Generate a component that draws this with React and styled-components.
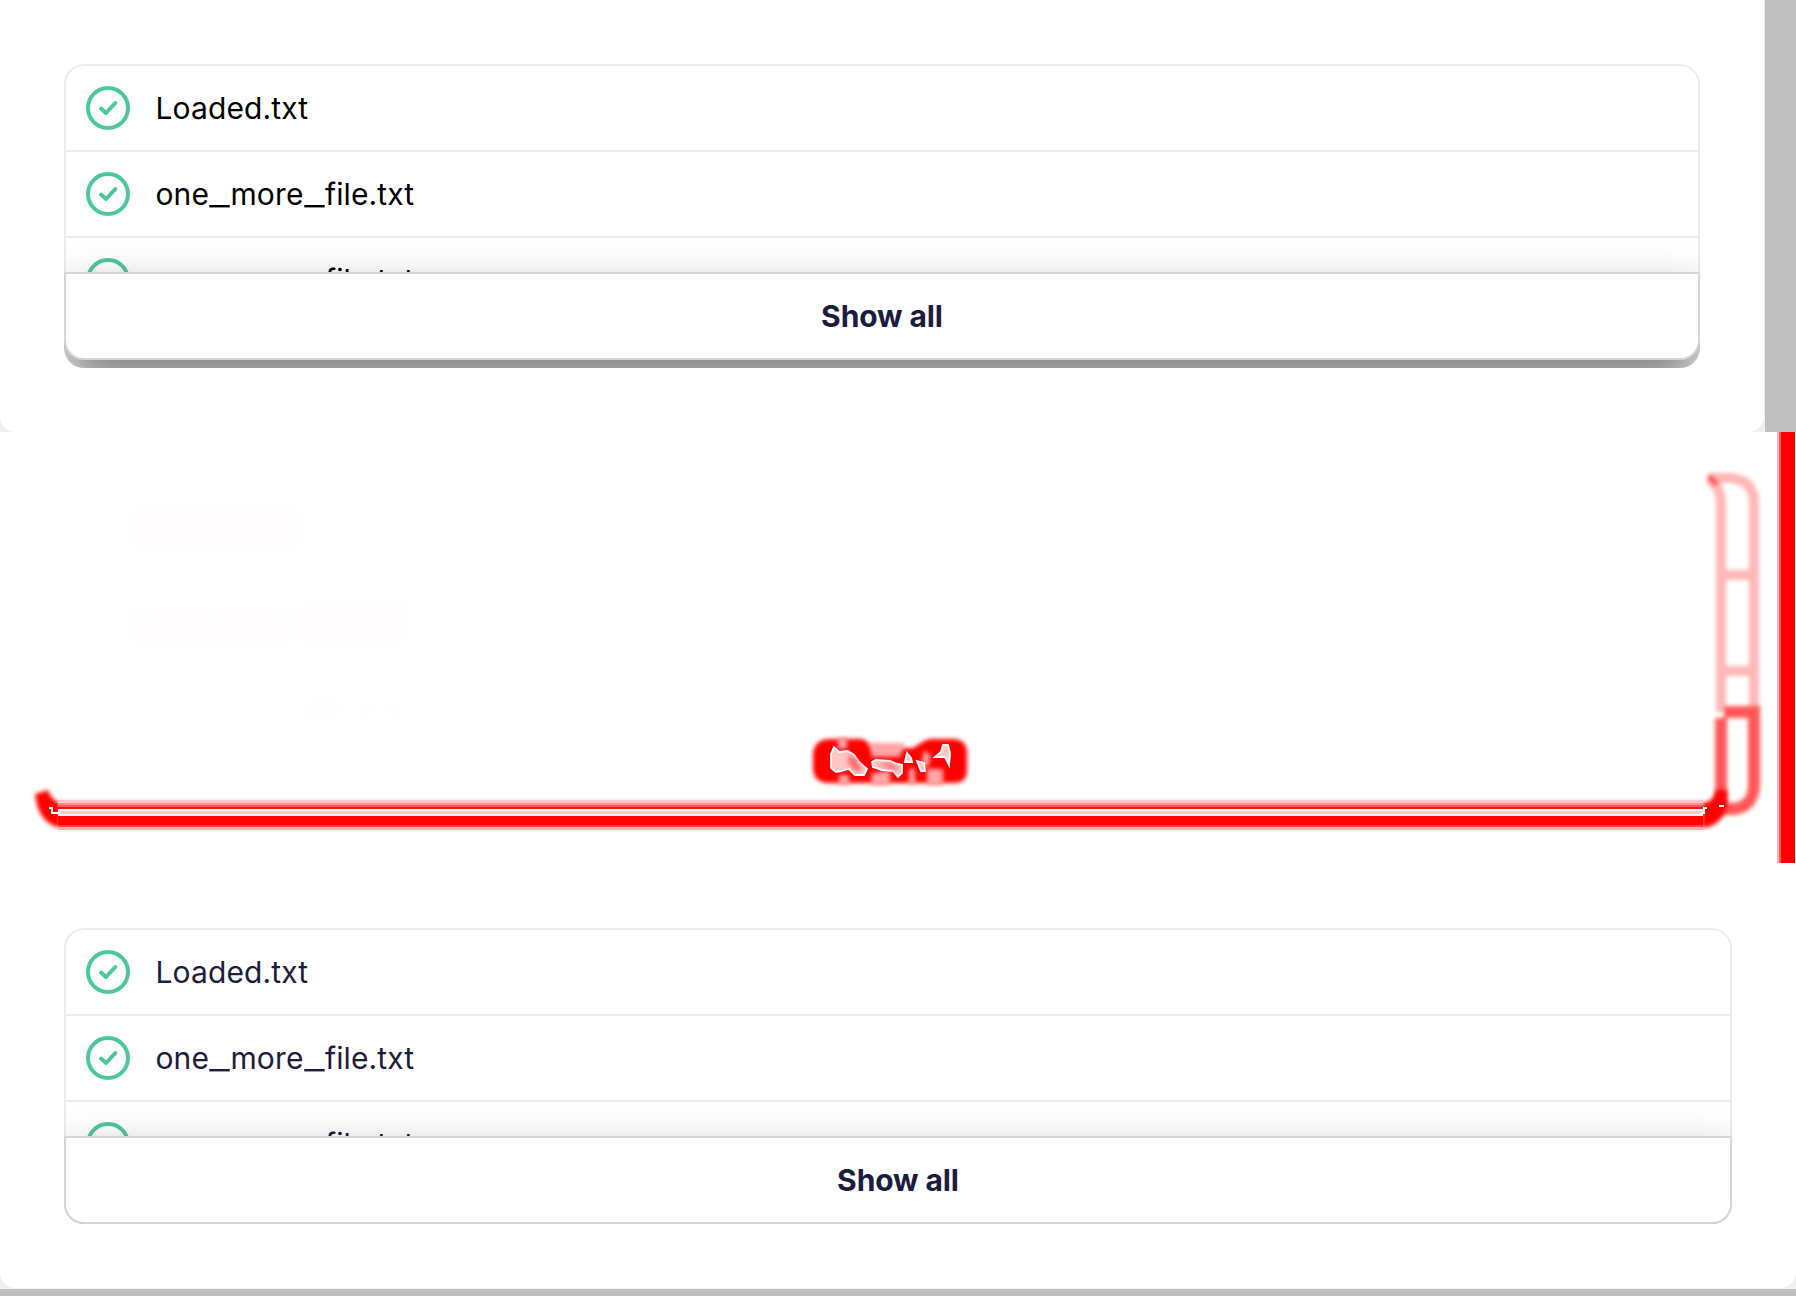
import React from 'react';
import styled, { createGlobalStyle } from 'styled-components';

const Global = createGlobalStyle`
  * { box-sizing: border-box; }
  body { margin: 0; background: #fff; font-family: Inter, "Liberation Sans", sans-serif; }
`;

const Page = styled.main`
  width: 1796px;
  height: 1296px;
  overflow: hidden;
  display: flex;
  flex-direction: column;
  background: #fff;
`;

const Frame = styled.section`
  display: flex;
  align-items: flex-start;
  height: 432px;
  background: #bfbfbf;
`;

const Backing = styled.div`
  width: ${(p) => p.$width}px;
  height: ${(p) => p.$height}px;
  background: #f0f0f0;
`;

const Surface = styled.div`
  height: ${(p) => p.$height}px;
  margin-right: ${(p) => p.$inset}px;
  padding: 64px;
  background: #fff;
  border-radius: 0 0 16px 16px;
`;

const Card = styled.div`
  display: flex;
  flex-direction: column;
  height: ${(p) => p.$height}px;
  border-radius: 20px;
  overflow: hidden;
  color: ${(p) => p.$ink};
`;

const Files = styled.ul`
  flex: none;
  height: 208px;
  margin: 0;
  padding: 0;
  list-style: none;
  overflow: hidden;
  border: 2px solid #ebebeb;
  border-bottom: 0;
  border-radius: 20px 20px 0 0;
`;

const File = styled.li`
  display: flex;
  align-items: center;
  gap: 25.5px;
  height: 86px;
  padding: 0 20px;
  border-bottom: 2px solid #ebebeb;
  font-size: 30px;
  line-height: 40px;
`;

const Name = styled.span`
  letter-spacing: 0.12px;
  white-space: nowrap;
`;

const Underscore = styled.span`
  display: inline-block;
  width: 21.4px;
  text-align: center;
  transform: scaleX(1.5);
`;

const Icon = styled.svg`
  flex: none;
  width: 44px;
  height: 44px;
`;

const ShowAll = styled.button`
  flex: none;
  position: relative;
  height: 88px;
  padding: 0;
  border: 2px solid #d6d6d6;
  border-radius: 0 0 20px 20px;
  background: #fff;
  box-shadow: 0 24px 46px rgba(0, 0, 0, 0.5);
  color: #1c1c3c;
  font: 700 30px/40px Inter, "Liberation Sans", sans-serif;
  letter-spacing: -0.1px;
`;

const Heatmap = styled.svg`
  display: block;
  flex: none;
  width: 1796px;
  height: 432px;
`;

const files = ['Loaded.txt', 'one_more_file.txt', 'one_more_file.txt'];

function CheckIcon() {
  return (
    <Icon viewBox="0 0 44 44" fill="none" stroke="#4bc99b" strokeWidth="4">
      <circle cx="22" cy="22" r="20" />
      <path d="M15 22.5 20 27 29.3 17" strokeLinecap="round" strokeLinejoin="round" />
    </Icon>
  );
}

function FileName({ text }) {
  return (
    <Name>
      {text.split('_').map((part, i) => (
        <React.Fragment key={i}>
          {i > 0 && <Underscore>_</Underscore>}
          {part}
        </React.Fragment>
      ))}
    </Name>
  );
}

function FileList({ ink, height }) {
  return (
    <Card $ink={ink} $height={height}>
      <Files>
        {files.map((f, i) => (
          <File key={i}>
            <CheckIcon />
            <FileName text={f} />
          </File>
        ))}
      </Files>
      <ShowAll>Show all</ShowAll>
    </Card>
  );
}

// [top, bottom, colour] bands of the changed bottom edge
const bands = [
  [798, 800, '#fff0f0'],
  [800, 803, '#ffc4c4'],
  [803, 805, '#ff9090'],
  [805, 807, '#ff5858'],
  [807, 809, '#ff1414'],
  [809, 811, '#ffffff'],
  [811, 814, '#ffcccc'],
  [814, 816, '#fff4f4'],
  [816, 825, '#ff0404'],
  [825, 827, '#ff4040'],
  [827, 830, '#ffacac'],
  [830, 832, '#fff2f2'],
];

function DiffMap() {
  return (
    <Heatmap viewBox="0 432 1796 432" fill="none">
      <defs>
        <filter id="soft" filterUnits="userSpaceOnUse" x="0" y="432" width="1796" height="432" colorInterpolationFilters="sRGB">
          <feGaussianBlur stdDeviation="2" />
        </filter>
      </defs>
      <g fill="#fffcfd" filter="url(#soft)">
        <rect x="131" y="509" width="169" height="38" rx="14" />
        <rect x="130" y="608" width="96" height="36" rx="14" />
        <rect x="206" y="608" width="90" height="36" rx="14" />
        <rect x="300" y="602" width="108" height="42" rx="14" />
        <rect x="307" y="700" width="32" height="17" rx="8" />
        <rect x="360" y="702" width="12" height="14" rx="6" />
        <rect x="389" y="702" width="12" height="14" rx="6" />
      </g>
      <g stroke="#ffb6b6" strokeWidth="10" filter="url(#soft)">
        <path d="M1708 478H1730Q1754 480 1754 503V712" />
        <path d="M1709 479Q1721 487 1721 504V712" />
        <path d="M1724 575H1751M1724 671H1751" />
      </g>
      <path d="M1709 477 1717 484" stroke="#ff5050" strokeWidth="5" filter="url(#soft)" />
      <path
        d="M1724 712H1754V787Q1752 809 1730 809H1721V718"
        stroke="#ff5656"
        strokeWidth="12"
        filter="url(#soft)"
      />
      <path
        d="M35 794 48 790Q51 800 60 803V828Q38 823 35 794ZM1702 803Q1714 802 1716 790H1727V806Q1722 826 1702 828Z"
        fill="#f00"
        filter="url(#soft)"
      />
      {bands.map(([top, bottom, colour]) => (
        <rect key={top} x="58" y={top} width="1645" height={bottom - top} fill={colour} />
      ))}
      <path d="M49 808H52V813H59V815M1707 808H1704V813H1702V815M1719 806H1724" stroke="#fff" strokeWidth="2" />
      <path
        d="M828 739H852Q866 738 869 744L874 748H913L924 741Q930 738 938 739H954Q967 740 967 753V770Q967 783 954 783H828Q813 782 813 768V753Q815 740 828 739Z"
        fill="#f00"
        filter="url(#soft)"
      />
      <g fill="#ffa5a5" filter="url(#soft)">
        <path d="M838 738H847V749H838ZM869 743H905L900 757H872ZM839 775H849V785H839ZM872 773 890 771V785H871ZM909 769H915V785H909ZM927 769H943V785H927ZM923 751 931 755 928 767 922 766Z" />
      </g>
      <g fill="#ffc4c4" stroke="#fff" strokeWidth="1.8">
        <path d="M831 754 834 747 839 752 848 751 854 755 859 762 867 769 864 775H855L849 769 841 771 836 772 831 768Z" />
        <path d="M872 762 876 760 890 761 895 763 902 765 902 773 898 777 893 771 882 770 873 767Z" />
        <path d="M905 762 907 753 911 758 912 762Z" />
        <path d="M917 761 924 763 925 771 921 771Z" />
        <path d="M935 757 941 752 943 745 948 745 950 753 949 765 945 757Z" />
      </g>
      <g fill="#ff6a6a" filter="url(#soft)">
        <path d="M849 754 856 759 862 770 855 771 848 763ZM877 763 890 763 899 769 894 770Z" />
      </g>
      <path d="M1777 432H1779V863H1777Z" fill="#ffb8b8" />
      <path d="M1779 432H1781V863H1779Z" fill="#ff5858" />
      <path d="M1781 432H1795V863H1781Z" fill="#f00" />
    </Heatmap>
  );
}

export default function App() {
  return (
    <>
      <Global />
      <Page>
        <Frame>
          <Backing $width={1765} $height={432}>
            <Surface $height={432} $inset={1}>
              <FileList ink="#000" height={304} />
            </Surface>
          </Backing>
        </Frame>
        <DiffMap />
        <Frame>
          <Backing $width={1796} $height={425}>
            <Surface $height={424} $inset={0}>
              <FileList ink="#1c1c3c" height={296} />
            </Surface>
          </Backing>
        </Frame>
      </Page>
    </>
  );
}
